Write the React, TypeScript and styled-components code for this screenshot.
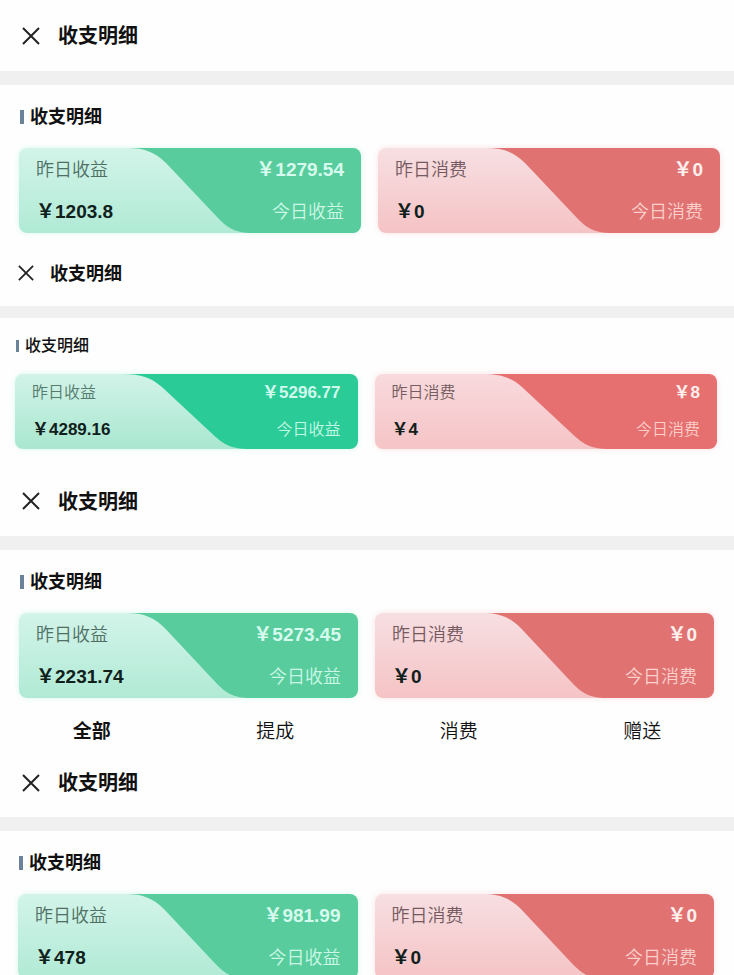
import React from "react";
import styled, { createGlobalStyle } from "styled-components";

const GlobalStyle = createGlobalStyle`
  *, *::before, *::after { box-sizing: border-box; }
  body {
    margin: 0;
    background: #fefefe;
    color: #111;
    font-family: "Liberation Sans", "Noto Sans CJK SC", sans-serif;
  }
  h1, h2, p { margin: 0; }
  button { border: 0; padding: 0; background: none; color: inherit; font-family: inherit; cursor: pointer; }
`;

// Full-width yen sign, one em wide.
const YUAN = "\uFFE5";

type Size = "regular" | "compact";
type Tone = "green" | "emerald" | "red" | "coral";

interface Sized {
  $size: Size;
}

interface Palette {
  solid: string;
  top: string;
  bottom: string;
  label: string;
  todayLabel: string;
  todayAmount: string;
  glow: string;
}

const tones: Record<Tone, Palette> = {
  green: { solid: "#58cc9c", top: "#d3f4e9", bottom: "#b0ead5", label: "#4f6f65", todayLabel: "#cbf8e6", todayAmount: "#d6fbee", glow: "#d9f8ec" },
  emerald: { solid: "#2bcb98", top: "#d2f3e8", bottom: "#a9e7d0", label: "#577a6e", todayLabel: "#c4f7e5", todayAmount: "#d0faec", glow: "#d9f8ec" },
  red: { solid: "#e07372", top: "#f7dfe2", bottom: "#f5c3c5", label: "#745a60", todayLabel: "#fbd0cc", todayAmount: "#fff0ed", glow: "#fbe3e4" },
  coral: { solid: "#e66f70", top: "#f8dadd", bottom: "#f5c4c6", label: "#745c60", todayLabel: "#fbcfca", todayAmount: "#fff0ed", glow: "#fbe3e4" },
};

const Page = styled.main`
  height: 100vh;
  overflow: hidden;
`;

const Header = styled.header<{ $size: Size; $height: number }>`
  display: flex;
  align-items: center;
  gap: ${(p) => (p.$size === "compact" ? 16 : 18)}px;
  height: ${(p) => p.$height}px;
  padding-left: ${(p) => (p.$size === "compact" ? 18 : 22)}px;
`;

const CloseButton = styled.button<Sized>`
  display: flex;
  width: ${(p) => (p.$size === "compact" ? 16 : 18)}px;
  svg { width: 100%; height: auto; }
`;

const Title = styled.h1<Sized>`
  padding-top: 1px;
  font-size: ${(p) => (p.$size === "compact" ? 18 : 20)}px;
  line-height: 28px;
  font-weight: 700;
`;

const Band = styled.div<Sized>`
  height: ${(p) => (p.$size === "compact" ? 12 : 14)}px;
  background: #f0f0f0;
`;

const Section = styled.section<{ $left: number; $right: number; $bottom: number; $size: Size }>`
  padding: ${(p) => (p.$size === "compact" ? 16 : 20)}px ${(p) => p.$right}px ${(p) => p.$bottom}px ${(p) => p.$left}px;
`;

const SectionTitle = styled.h2<Sized>`
  display: flex;
  align-items: center;
  gap: 6px;
  margin-bottom: ${(p) => (p.$size === "compact" ? 16 : 19)}px;
  padding-left: 1px;
  font-size: ${(p) => (p.$size === "compact" ? 16 : 18)}px;
  line-height: 24px;
  font-weight: ${(p) => (p.$size === "compact" ? 500 : 700)};
  &::before {
    content: "";
    width: ${(p) => (p.$size === "compact" ? 3 : 4)}px;
    height: ${(p) => (p.$size === "compact" ? 12 : 14)}px;
    background: #6b8399;
  }
`;

const Cards = styled.div`
  display: grid;
  grid-template-columns: 1fr 1fr;
  gap: 17px;
`;

const CardBox = styled.article<{ $tone: Tone; $size: Size }>`
  position: relative;
  display: grid;
  grid-template-columns: auto auto;
  justify-content: space-between;
  row-gap: ${(p) => (p.$size === "compact" ? 17 : 20)}px;
  padding: ${(p) => (p.$size === "compact" ? "9px 17px" : "11px 17px 10px")};
  overflow: hidden;
  border-radius: 8px;
  box-shadow: 0 0 6px ${(p) => tones[p.$tone].glow};
  line-height: ${(p) => (p.$size === "compact" ? 20 : 22)}px;
`;

const Wave = styled.svg`
  position: absolute;
  inset: 0;
  width: 100%;
  height: 100%;
`;

const Label = styled.p<{ $color: string; $size: Size; $end?: boolean }>`
  position: relative;
  color: ${(p) => p.$color};
  font-size: ${(p) => (p.$size === "compact" ? 16 : 18)}px;
  font-weight: 350;
  text-align: ${(p) => (p.$end ? "right" : "left")};
`;

const Amount = styled.p<{ $color: string; $size: Size; $end?: boolean }>`
  position: relative;
  color: ${(p) => p.$color};
  font-size: ${(p) => (p.$size === "compact" ? 17 : 19)}px;
  font-weight: 700;
  text-align: ${(p) => (p.$end ? "right" : "left")};
`;

const Tabs = styled.nav`
  display: grid;
  grid-template-columns: repeat(4, 1fr);
`;

const Tab = styled.button<{ $active?: boolean }>`
  font-size: 19px;
  line-height: 32px;
  font-weight: ${(p) => (p.$active ? 700 : 350)};
`;

interface CardData {
  name: string;
  tone: Tone;
  yesterday: string;
  today: string;
}

interface RecordData {
  id: string;
  size: Size;
  header: number;
  left: number;
  right: number;
  bottom: number;
  cards: CardData[];
  tabs?: string[];
}

const records: RecordData[] = [
  {
    id: "a", size: "regular", header: 71, left: 19, right: 14, bottom: 7,
    cards: [
      { name: "收益", tone: "green", yesterday: "1203.8", today: "1279.54" },
      { name: "消费", tone: "red", yesterday: "0", today: "0" },
    ],
  },
  {
    id: "b", size: "compact", header: 66, left: 15, right: 17, bottom: 17,
    cards: [
      { name: "收益", tone: "emerald", yesterday: "4289.16", today: "5296.77" },
      { name: "消费", tone: "coral", yesterday: "4", today: "8" },
    ],
  },
  {
    id: "c", size: "regular", header: 70, left: 19, right: 20, bottom: 18,
    cards: [
      { name: "收益", tone: "green", yesterday: "2231.74", today: "5273.45" },
      { name: "消费", tone: "red", yesterday: "0", today: "0" },
    ],
    tabs: ["全部", "提成", "消费", "赠送"],
  },
  {
    id: "d", size: "regular", header: 69, left: 18, right: 20, bottom: 18,
    cards: [
      { name: "收益", tone: "green", yesterday: "478", today: "981.99" },
      { name: "消费", tone: "red", yesterday: "0", today: "0" },
    ],
  },
];

function Card({ data, size, id }: { data: CardData; size: Size; id: string }) {
  const tone = tones[data.tone];
  return (
    <CardBox $tone={data.tone} $size={size}>
      <Wave viewBox="0 0 342 85" preserveAspectRatio="none" aria-hidden="true">
        <defs>
          <linearGradient id={id} x1="0" y1="0" x2="0" y2="1">
            <stop offset="0" stopColor={tone.top} />
            <stop offset="1" stopColor={tone.bottom} />
          </linearGradient>
        </defs>
        <rect x="100" width="243" height="85" fill={tone.solid} />
        <path d="M0 0H109C125 0 136 4 147 15L199 70C208 79 215 85 234 85H0Z" fill={`url(#${id})`} />
      </Wave>
      <Label $color={tone.label} $size={size}>昨日{data.name}</Label>
      <Amount $color={tone.todayAmount} $size={size} $end>{YUAN + data.today}</Amount>
      <Amount $color="#10201b" $size={size}>{YUAN + data.yesterday}</Amount>
      <Label $color={tone.todayLabel} $size={size} $end>今日{data.name}</Label>
    </CardBox>
  );
}

export default function App() {
  return (
    <Page>
      <GlobalStyle />
      {records.map((record) => (
        <React.Fragment key={record.id}>
          <Header $size={record.size} $height={record.header}>
            <CloseButton type="button" aria-label="关闭" $size={record.size}>
              <svg viewBox="0 0 18 18" fill="none" stroke="#222" strokeWidth="2" aria-hidden="true">
                <path d="M1 1L17 17M17 1L1 17" />
              </svg>
            </CloseButton>
            <Title $size={record.size}>收支明细</Title>
          </Header>
          <Band $size={record.size} />
          <Section $left={record.left} $right={record.right} $bottom={record.bottom} $size={record.size}>
            <SectionTitle $size={record.size}>收支明细</SectionTitle>
            <Cards>
              {record.cards.map((card) => (
                <Card key={card.name} data={card} size={record.size} id={`wave-${record.id}-${card.tone}`} />
              ))}
            </Cards>
          </Section>
          {record.tabs && (
            <Tabs aria-label="明细类型">
              {record.tabs.map((tab, index) => (
                <Tab key={tab} type="button" $active={index === 0}>{tab}</Tab>
              ))}
            </Tabs>
          )}
        </React.Fragment>
      ))}
    </Page>
  );
}
